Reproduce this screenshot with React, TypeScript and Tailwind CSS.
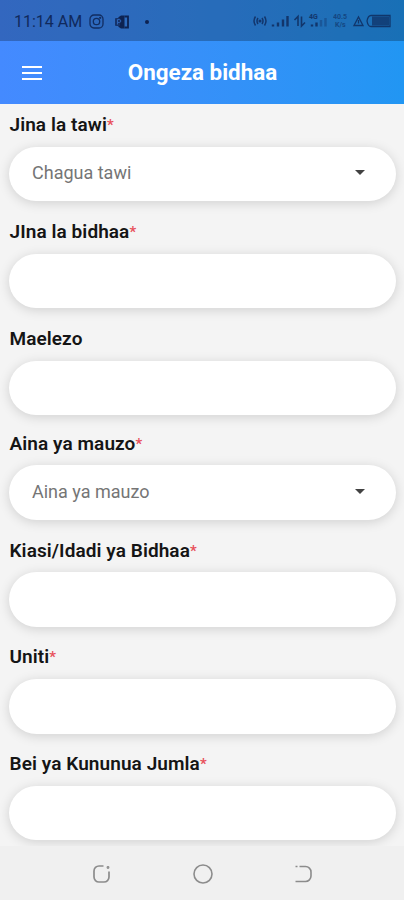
import { useState } from "react";

interface Field {
    id: string;
    label: string;
    required: boolean;
    placeholder?: string;
    options?: string[];
}

const fields: Field[] = [
    { id: "branch", label: "Jina la tawi", required: true, placeholder: "Chagua tawi", options: [] },
    { id: "name", label: "JIna la bidhaa", required: true },
    { id: "details", label: "Maelezo", required: false },
    { id: "saleType", label: "Aina ya mauzo", required: true, placeholder: "Aina ya mauzo", options: [] },
    { id: "quantity", label: "Kiasi/Idadi ya Bidhaa", required: true },
    { id: "unit", label: "Uniti", required: true },
    { id: "buyPrice", label: "Bei ya Kununua Jumla", required: true }
];

function StatusBar() {
    return (
        <div className="flex items-center h-[41px] bg-black/25 pt-[2px] pl-[14px] pr-[13px] text-[#0d2352]">
            <span className="text-[16px] leading-none opacity-90">11:14 AM</span>

            {/* Notification icons */}
            <svg className="ml-[7px] w-[15px] h-[15px] opacity-85" viewBox="0 0 15 15" fill="none" stroke="currentColor" strokeWidth="1.3">
                <rect x="1" y="1" width="13" height="13" rx="4" />
                <circle cx="7.5" cy="7.5" r="3.2" />
                <circle cx="11.2" cy="3.8" r="0.5" />
            </svg>
            <svg className="ml-[11px] w-[15px] h-[14px]" viewBox="0 0 15 14">
                <path d="M3 2.500 6 .5h3.500v13H6L3 11.500l2-1v-7z" fill="currentColor" />
                <rect x="0" y="3" width="7.5" height="8" rx="1" fill="currentColor" opacity="0.75" />
                <path d="M2.5 9.5v-5h1.8a1.5 1.5 0 0 1 0 3H2.5" fill="none" stroke="#2c62b4" strokeWidth="1" />
                <path d="M9.500 1.500h3.500v11H9.500" fill="none" stroke="currentColor" strokeWidth="1.8" />
            </svg>
            <span className="ml-[15px] w-[4px] h-[4px] rounded-full bg-current" />

            {/* System icons */}
            <svg className="ml-auto w-[138px] h-[18px] -mt-px opacity-75" viewBox="0 0 138 18" fill="none" stroke="currentColor">
                <g strokeWidth="1.5">
                    <path d="M2.5 4.5q-3 4.500 0 9M5 6q-2 3 0 6M11.500 4.500q3 4.500 0 9M9 6q2 3 0 6" />
                    <circle cx="7" cy="9" r="0.8" fill="currentColor" />
                </g>
                <g strokeWidth="2.4">
                    <path d="M20 14.500v-2M25 14.500v-4M30 14.500v-7M34.500 14.500V4" />
                </g>
                <path d="M41.500 8 45 4.500V14M48.500 4.500V14L52 10.500" strokeWidth="1.6" />
                <g strokeWidth="2.4">
                    <path d="M59 14.500v-2M63.500 14.500v-4" />
                    <path d="M68 14.500V8M72.500 14.500V6" opacity="0.4" />
                </g>
                <text x="56" y="6.500" fontSize="7" fontWeight="700" fill="currentColor" stroke="none">4G</text>
                <g fontSize="7" fontWeight="700" fill="currentColor" stroke="none" opacity="0.7">
                    <text x="80" y="7">40.5</text>
                    <text x="82" y="14.500">K/s</text>
                </g>
                <path d="M101 13.500 105.500 5l4.500 8.500zM105.500 8v3.500" strokeWidth="1.3" />
                <path d="M137 3.500h-19q-3 0-4 5.500 1 5.500 4 5.500h19z" strokeWidth="1.3" />
                <rect x="119" y="4.500" width="17" height="9" fill="currentColor" stroke="none" opacity="0.8" />
            </svg>
        </div>
    );
}

function NavBar() {
    return (
        <nav className="flex justify-center items-center gap-[81px] h-[54px] pt-px pl-px bg-[#f0f0f0] text-[#8c8c8c]">
            <button aria-label="Recents">
                <svg className="w-[20px] h-[20px]" viewBox="0 0 20 20" fill="none" stroke="currentColor" strokeWidth="1.7">
                    <path d="M11.500 2H7a5 5 0 0 0-5 5v6a5 5 0 0 0 5 5h5a5 5 0 0 0 5-5V7.500" />
                    <circle cx="16" cy="3.500" r="0.600" />
                </svg>
            </button>
            <button aria-label="Home">
                <svg className="w-[20px] h-[20px]" viewBox="0 0 20 20" fill="none" stroke="currentColor" strokeWidth="1.6">
                    <circle cx="10" cy="10" r="9" />
                </svg>
            </button>
            <button aria-label="Back">
                <svg className="w-[20px] h-[20px]" viewBox="0 0 20 20" fill="none" stroke="currentColor" strokeWidth="1.6">
                    <path d="M1.500 2.500h2M5.500 2.500h6a5.500 5.500 0 0 1 5.500 5.500v4a5.500 5.500 0 0 1-5.500 5.500H1.500" />
                </svg>
            </button>
        </nav>
    );
}

export default function App() {
    const [values, setValues] = useState<Record<string, string>>({});

    const handleChange = (id: string, value: string) => {
        setValues({ ...values, [id]: value });
    };

    return (
        <div className="flex flex-col w-full h-[900px] overflow-hidden bg-[#f4f4f4] font-['Roboto',sans-serif]">
            <header className="shrink-0 h-[104px] bg-gradient-to-r from-[#448aff] to-[#2196f3]">
                <StatusBar />
                <div className="grid grid-cols-[64px_1fr_64px] items-center h-[63px] text-white">
                    <button aria-label="Menu" className="flex flex-col gap-[4px] ml-[22px] w-[20px]">
                        <span className="h-[2px] w-full bg-white" />
                        <span className="h-[2px] w-full bg-white" />
                        <span className="h-[2px] w-full bg-white" />
                    </button>
                    <h1 className="pl-px text-center text-[22.4px] font-bold leading-none">Ongeza bidhaa</h1>
                </div>
            </header>

            <main className="flex flex-col flex-1 gap-[17px] pt-[7.25px] pl-[9px] pr-[8px]">
                {fields.map((field) => (
                    <div key={field.id} className={field.id === "saleType" ? "-mt-[2px]" : ""}>
                        <label htmlFor={field.id} className="flex items-center h-[28px] mb-[7.5px] pl-[0.5px] text-[19px] tracking-[0.08px] font-semibold text-[#151515]">
                            {field.label}
                            {field.required && <span className="text-[15px] text-[#e8505b]">*</span>}
                        </label>
                        <div className="flex items-center h-[54.4px] rounded-full bg-white shadow-[0_2px_12px_rgba(0,0,0,0.15)]">
                            {field.options ? (
                                <button id={field.id} className="flex justify-between items-center w-full h-full pb-[2px] pl-[23px] pr-[31px] text-[18px] text-[#757575]">
                                    <span>{field.placeholder}</span>
                                    <svg className="w-[10px] h-[5px]" viewBox="0 0 10 5">
                                        <path d="M0 0h10L5 5z" fill="#424242" />
                                    </svg>
                                </button>
                            ) : (
                                <input
                                    id={field.id}
                                    type="text"
                                    value={values[field.id] ?? ""}
                                    onChange={(e) => handleChange(field.id, e.target.value)}
                                    className="w-full h-full px-[23px] bg-transparent outline-none text-[18px] text-zinc-800"
                                />
                            )}
                        </div>
                    </div>
                ))}
            </main>

            <NavBar />
        </div>
    );
}
